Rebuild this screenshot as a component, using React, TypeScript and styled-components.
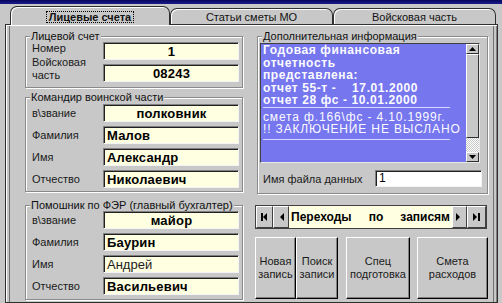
import React from 'react';
import styled, { createGlobalStyle } from 'styled-components';

const GlobalStyle = createGlobalStyle`
    html, body {
        margin: 0;
        padding: 0;
        background: #c8c8c8;
    }
    body {
        font-family: "Liberation Sans", Arial, sans-serif;
    }
`;

type Row = {
    label: string
    value: string
    center?: boolean
    plain?: boolean
}

const commander: Row[] = [
    {label: 'в\\звание', value: 'полковник', center: true},
    {label: 'Фамилия', value: 'Малов'},
    {label: 'Имя', value: 'Александр'},
    {label: 'Отчество', value: 'Николаевич'},
];

const assistant: Row[] = [
    {label: 'в\\звание', value: 'майор', center: true},
    {label: 'Фамилия', value: 'Баурин'},
    {label: 'Имя', value: 'Андрей', plain: true},
    {label: 'Отчество', value: 'Васильевич'},
];

const Screen = styled.div`
    width: 502px;
    height: 303px;
    overflow: hidden;
    background: #c8c8c8;
    display: flex;
    flex-direction: column;
`;

const TitleStrip = styled.div`
    flex: none;
    height: 4px;
    background: linear-gradient(#06065e, #1c1c8c);
`;

const TabBar = styled.div`
    flex: none;
    height: 20px;
    display: flex;
    align-items: flex-end;
    padding-left: 10px;
    position: relative;
    z-index: 1;
`;

const Tab = styled.div<{ $active?: boolean; $width: number }>`
    box-sizing: border-box;
    width: ${p => p.$width}px;
    height: ${p => (p.$active ? 19 : 16)}px;
    margin-bottom: ${p => (p.$active ? -1 : 0)}px;
    background: #c8c8c8;
    border: 1px solid #303030;
    border-bottom: none;
    border-radius: 7px 7px 0 0;
    box-shadow: inset 1px 1px 0 #fff;
    display: flex;
    justify-content: center;
    align-items: ${p => (p.$active ? 'flex-start' : 'center')};
    padding-top: ${p => (p.$active ? 4 : 0)}px;
    font-size: 11px;
    font-weight: ${p => (p.$active ? 'bold' : 'normal')};
    color: #111;
`;

const FocusText = styled.span`
    border: 1px dotted #000;
    padding: 0 2px;
    line-height: 10px;
`;

const Panel = styled.div`
    flex: 1;
    margin: 0 4px 0 5px;
    border: 1px solid #303030;
    box-shadow: inset 1px 1px 0 #fff, inset -1px 0 0 #808080, inset 3px 0 0 #c8c8c8,
        inset -3px 0 0 #c8c8c8, inset 4px 0 0 #707070, inset -4px 0 0 #707070;
    padding: 5px 9px 0 19px;
    display: grid;
    grid-template-columns: 218px 231px;
    column-gap: 14px;
    align-items: start;
`;

const Column = styled.div`
    display: flex;
    flex-direction: column;
`;

const Group = styled.fieldset<{ $mt?: number; $pb?: number }>`
    margin: ${p => p.$mt ?? 0}px 0 0 0;
    padding: 0 3px ${p => p.$pb ?? 4}px 6px;
    min-width: 0;
    border: 1px solid #8a8a8a;
    box-shadow: inset 1px 1px 0 #fff, 1px 1px 0 #fff;
`;

const InfoGroup = styled(Group)`
    padding-left: 2px;
    padding-right: 7px;
`;

const Legend = styled.legend<{ $ml?: number }>`
    margin-left: ${p => p.$ml ?? -2}px;
    padding: 0 1px;
    font-size: 11px;
    line-height: 12px;
    color: #111;
    background: #c8c8c8;
    position: relative;
`;

const Rows = styled.div<{ $pt?: number }>`
    display: grid;
    grid-template-columns: 71px 136px;
    row-gap: 4px;
    padding-top: ${p => p.$pt ?? 0}px;
`;

const Label = styled.div<{ $tall?: boolean }>`
    font-size: 11px;
    line-height: ${p => (p.$tall ? 13 : 12)}px;
    color: #1a1a1a;
    align-self: ${p => (p.$tall ? 'start' : 'center')};
    margin-top: ${p => (p.$tall ? -8 : 0)}px;
`;

const TopLabel = styled(Label)`
    align-self: start;
    margin-top: 0;
`;

const Field = styled.div<{ $center?: boolean; $plain?: boolean }>`
    box-sizing: border-box;
    height: 18px;
    background: #ffffe1;
    border: 1px solid;
    border-color: #808080 #f4f4f4 #f4f4f4 #808080;
    box-shadow: inset 1px 1px 0 #202020;
    padding: 1px 2px 0 3px;
    font-size: 13px;
    line-height: 15px;
    font-weight: ${p => (p.$plain ? 'normal' : 'bold')};
    color: ${p => (p.$plain ? '#1c1c1c' : '#000')};
    text-align: ${p => (p.$center ? 'center' : 'left')};
    letter-spacing: ${p => (p.$plain ? 0 : 0.2)}px;
    white-space: nowrap;
    overflow: hidden;
`;

const Memo = styled.div`
    box-sizing: border-box;
    margin: 1px 0 0 0;
    height: 120px;
    display: flex;
    border: 1px solid;
    border-color: #404040 #e8e8e8 #e8e8e8 #404040;
    background: #7676ee;
`;

const MemoText = styled.div`
    flex: 1;
    padding: 0 0 0 2px;
    color: #fbfbff;
    font-size: 12px;
    line-height: 12.5px;
    white-space: pre;
    overflow: hidden;
`;

const MemoLine = styled.div<{ $bold?: boolean }>`
    font-weight: ${p => (p.$bold ? 'bold' : 'normal')};
    letter-spacing: ${p => (p.$bold ? 0.6 : 0.85)}px;
`;

const MemoRule = styled.div<{ $mt?: number; $mb?: number }>`
    width: 187px;
    height: 1px;
    background: #d8d8ff;
    margin: ${p => p.$mt ?? 0}px 0 ${p => p.$mb ?? 0}px 0;
`;

const ScrollBar = styled.div`
    width: 13px;
    flex: none;
    display: flex;
    flex-direction: column;
    background-image: repeating-conic-gradient(#ffffff 0 25%, #c8c8c8 0 50%);
    background-size: 2px 2px;
`;

const ScrollButton = styled.div<{ $size?: number }>`
    box-sizing: border-box;
    height: ${p => p.$size ?? 10}px;
    flex: none;
    background: #c8c8c8;
    border: 1px solid;
    border-color: #fff #303030 #303030 #fff;
    display: flex;
    align-items: center;
    justify-content: center;
`;

const ScrollTrack = styled.div`
    flex: 1;
`;

const FileRow = styled.div`
    margin-top: 7px;
    display: grid;
    grid-template-columns: 115px 107px;
    align-items: center;
`;

const FileLabel = styled.div`
    padding-left: 3px;
    font-size: 11px;
    color: #1a1a1a;
`;

const FileInput = styled.div`
    box-sizing: border-box;
    height: 17px;
    background: #fff;
    border: 1px solid;
    border-color: #808080 #f4f4f4 #f4f4f4 #808080;
    box-shadow: inset 1px 1px 0 #202020;
    padding: 1px 0 0 3px;
    font-size: 12px;
    line-height: 13px;
    color: #000;
`;

const NavBar = styled.div`
    box-sizing: border-box;
    margin: 11px 0 0 -2px;
    width: 232px;
    height: 24px;
    display: flex;
    border: 1px solid #404040;
    background: #ffffe1;
`;

const NavButton = styled.div<{ $width: number }>`
    box-sizing: border-box;
    width: ${p => p.$width}px;
    flex: none;
    background: #c8c8c8;
    border: 1px solid;
    border-color: #fff #404040 #404040 #fff;
    display: flex;
    align-items: center;
    justify-content: center;
`;

const NavText = styled.div`
    flex: 1;
    padding: 0 2px;
    font-size: 12px;
    font-weight: bold;
    line-height: 22px;
    color: #000;
    text-align: justify;
    text-align-last: justify;
`;

const ActionRow = styled.div`
    margin: 8px 0 0 -2px;
    display: flex;
    height: 62px;
`;

const ActionButton = styled.div<{ $width: number; $ml?: number }>`
    box-sizing: border-box;
    width: ${p => p.$width}px;
    margin-left: ${p => p.$ml ?? 0}px;
    background: #c8c8c8;
    border: 1px solid;
    border-color: #fff #000 #000 #fff;
    box-shadow: inset -1px -1px 0 #808080;
    display: flex;
    align-items: center;
    justify-content: center;
    text-align: center;
    font-size: 11px;
    line-height: 13px;
    color: #1a1a1a;
`;

const Arrow = ({dir, bar}: { dir: 'left' | 'right' | 'up' | 'down'; bar?: boolean }) => {
    if (dir === 'up' || dir === 'down') {
        return (
            <svg width="7" height="4" viewBox="0 0 7 4">
                <polygon points={dir === 'up' ? '0,4 7,4 3.5,0' : '0,0 7,0 3.5,4'} fill="#000"/>
            </svg>
        );
    }
    const tri = dir === 'left' ? '7,0 7,8 3,4' : '1,0 1,8 5,4';
    return (
        <svg width="9" height="8" viewBox="0 0 9 8">
            <polygon points={tri} fill="#000"/>
            {bar && <rect x={dir === 'left' ? 1 : 6} y="0" width="2" height="8" fill="#000"/>}
        </svg>
    );
};

const FieldRows = ({rows, pt}: { rows: Row[]; pt?: number }) => (
    <Rows $pt={pt}>
        {rows.map(r => (
            <React.Fragment key={r.label + r.value}>
                <Label>{r.label}</Label>
                <Field $center={r.center} $plain={r.plain}>{r.value}</Field>
            </React.Fragment>
        ))}
    </Rows>
);

export default function App() {
    return (
        <Screen>
            <GlobalStyle/>
            <TitleStrip/>
            <TabBar>
                <Tab $active $width={160}><FocusText>Лицевые счета</FocusText></Tab>
                <Tab $width={163}>Статьи сметы МО</Tab>
                <Tab $width={163}>Войсковая часть</Tab>
            </TabBar>
            <Panel>
                <Column>
                    <Group $pb={5}>
                        <Legend>Лицевой счет</Legend>
                        <Rows>
                            <TopLabel>Номер</TopLabel>
                            <Field $center>1</Field>
                            <Label $tall>Войсковая<br/>часть</Label>
                            <Field $center>08243</Field>
                        </Rows>
                    </Group>
                    <Group $mt={3} $pb={3}>
                        <Legend>Командир воинской части</Legend>
                        <FieldRows rows={commander} pt={1}/>
                    </Group>
                    <Group $mt={7} $pb={4}>
                        <Legend>Помошник по ФЭР (главный бухгалтер)</Legend>
                        <FieldRows rows={assistant}/>
                    </Group>
                </Column>
                <Column>
                    <InfoGroup $pb={6}>
                        <Legend $ml={2}>Дополнительная информация</Legend>
                        <Memo>
                            <MemoText>
                                <MemoLine $bold>Годовая финансовая</MemoLine>
                                <MemoLine $bold>отчетность</MemoLine>
                                <MemoLine $bold>представлена:</MemoLine>
                                <MemoLine $bold>{'отчет 55-т -    17.01.2000'}</MemoLine>
                                <MemoLine $bold>{'отчет 28 фс - 10.01.2000'}</MemoLine>
                                <MemoRule $mb={3}/>
                                <MemoLine>{'смета ф.166\\фс - 4.10.1999г.'}</MemoLine>
                                <MemoLine>{'!! ЗАКЛЮЧЕНИЕ НЕ ВЫСЛАНО'}</MemoLine>
                                <MemoRule $mt={3}/>
                            </MemoText>
                            <ScrollBar>
                                <ScrollButton><Arrow dir="up"/></ScrollButton>
                                <ScrollButton $size={84}/>
                                <ScrollTrack/>
                                <ScrollButton><Arrow dir="down"/></ScrollButton>
                            </ScrollBar>
                        </Memo>
                        <FileRow>
                            <FileLabel>Имя файла данных</FileLabel>
                            <FileInput>1</FileInput>
                        </FileRow>
                    </InfoGroup>
                    <NavBar>
                        <NavButton $width={17}><Arrow dir="left" bar/></NavButton>
                        <NavButton $width={16}><Arrow dir="left"/></NavButton>
                        <NavText>Переходы по записям</NavText>
                        <NavButton $width={15}><Arrow dir="right"/></NavButton>
                        <NavButton $width={19}><Arrow dir="right" bar/></NavButton>
                    </NavBar>
                    <ActionRow>
                        <ActionButton $width={41}>Новая<br/>запись</ActionButton>
                        <ActionButton $width={42}>Поиск<br/>записи</ActionButton>
                        <ActionButton $width={64} $ml={8}>Спец<br/>подготовка</ActionButton>
                        <ActionButton $width={71} $ml={7}>Смета<br/>расходов</ActionButton>
                    </ActionRow>
                </Column>
            </Panel>
        </Screen>
    );
}
